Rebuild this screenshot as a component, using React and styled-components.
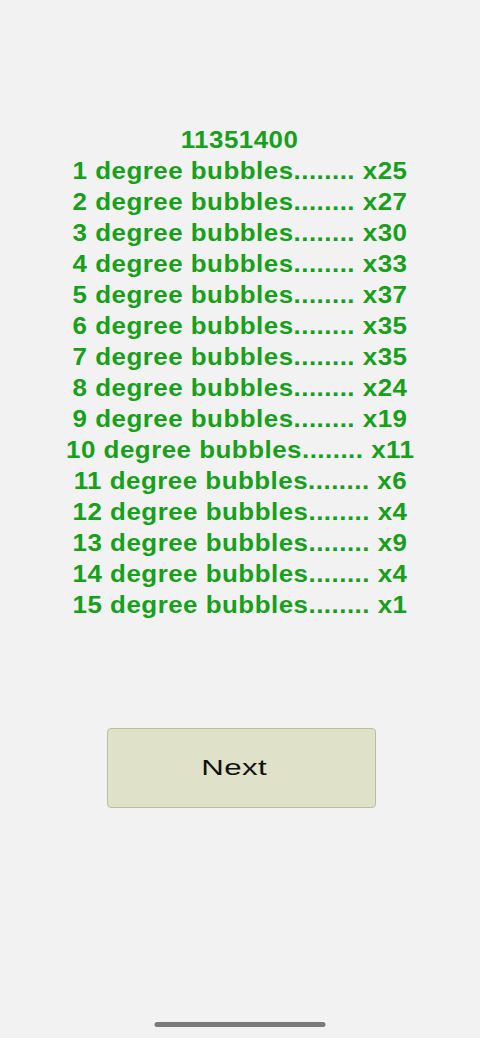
import React from "react";
import styled, { createGlobalStyle } from "styled-components";

const Global = createGlobalStyle`
  html, body { margin: 0; padding: 0; background: #f2f2f2; }
  #root { min-height: 100vh; }
`;

const Page = styled.div`
  width: 480px;
  height: 1038px;
  background: #f2f2f2;
  display: flex;
  flex-direction: column;
  align-items: center;
  box-sizing: border-box;
  padding-top: 124px;
  position: relative;
`;

const Results = styled.div`
  display: flex;
  flex-direction: column;
  align-items: center;
  font-family: "Liberation Sans", Arial, sans-serif;
  font-weight: bold;
  font-size: 24px;
  letter-spacing: 0.45px;
  line-height: 31px;
  color: #17a01b;
  text-align: center;
`;

const Line = styled.div`
  white-space: pre;
  transform: scaleX(1.08);
`;

const NextButton = styled.button`
  margin-top: 108px;
  margin-left: 3px;
  width: 269px;
  height: 80px;
  box-sizing: border-box;
  background: #dfe2c8;
  border: 1px solid #b9bca9;
  border-radius: 4px;
  font-family: "Liberation Sans", Arial, sans-serif;
  font-size: 22px;
  color: #111;
  padding: 0 14px 0 0;
  display: flex;
  align-items: center;
  justify-content: center;
`;

const Label = styled.span`
  display: inline-block;
  transform: scaleX(1.42);
  letter-spacing: 0.3px;
`;

const HomeIndicator = styled.div`
  position: absolute;
  bottom: 11px;
  left: 50%;
  transform: translateX(-50%);
  width: 171px;
  height: 5px;
  border-radius: 3px;
  background: #7a7a7a;
`;

const counts = [25, 27, 30, 33, 37, 35, 35, 24, 19, 11, 6, 4, 9, 4, 1];

export default function App() {
  return (
    <>
      <Global />
      <Page>
        <Results>
          <Line>11351400</Line>
          {counts.map((c, i) => (
            <Line key={i}>{`${i + 1} degree bubbles........ x${c}`}</Line>
          ))}
        </Results>
        <NextButton>
          <Label>Next</Label>
        </NextButton>
        <HomeIndicator />
      </Page>
    </>
  );
}
